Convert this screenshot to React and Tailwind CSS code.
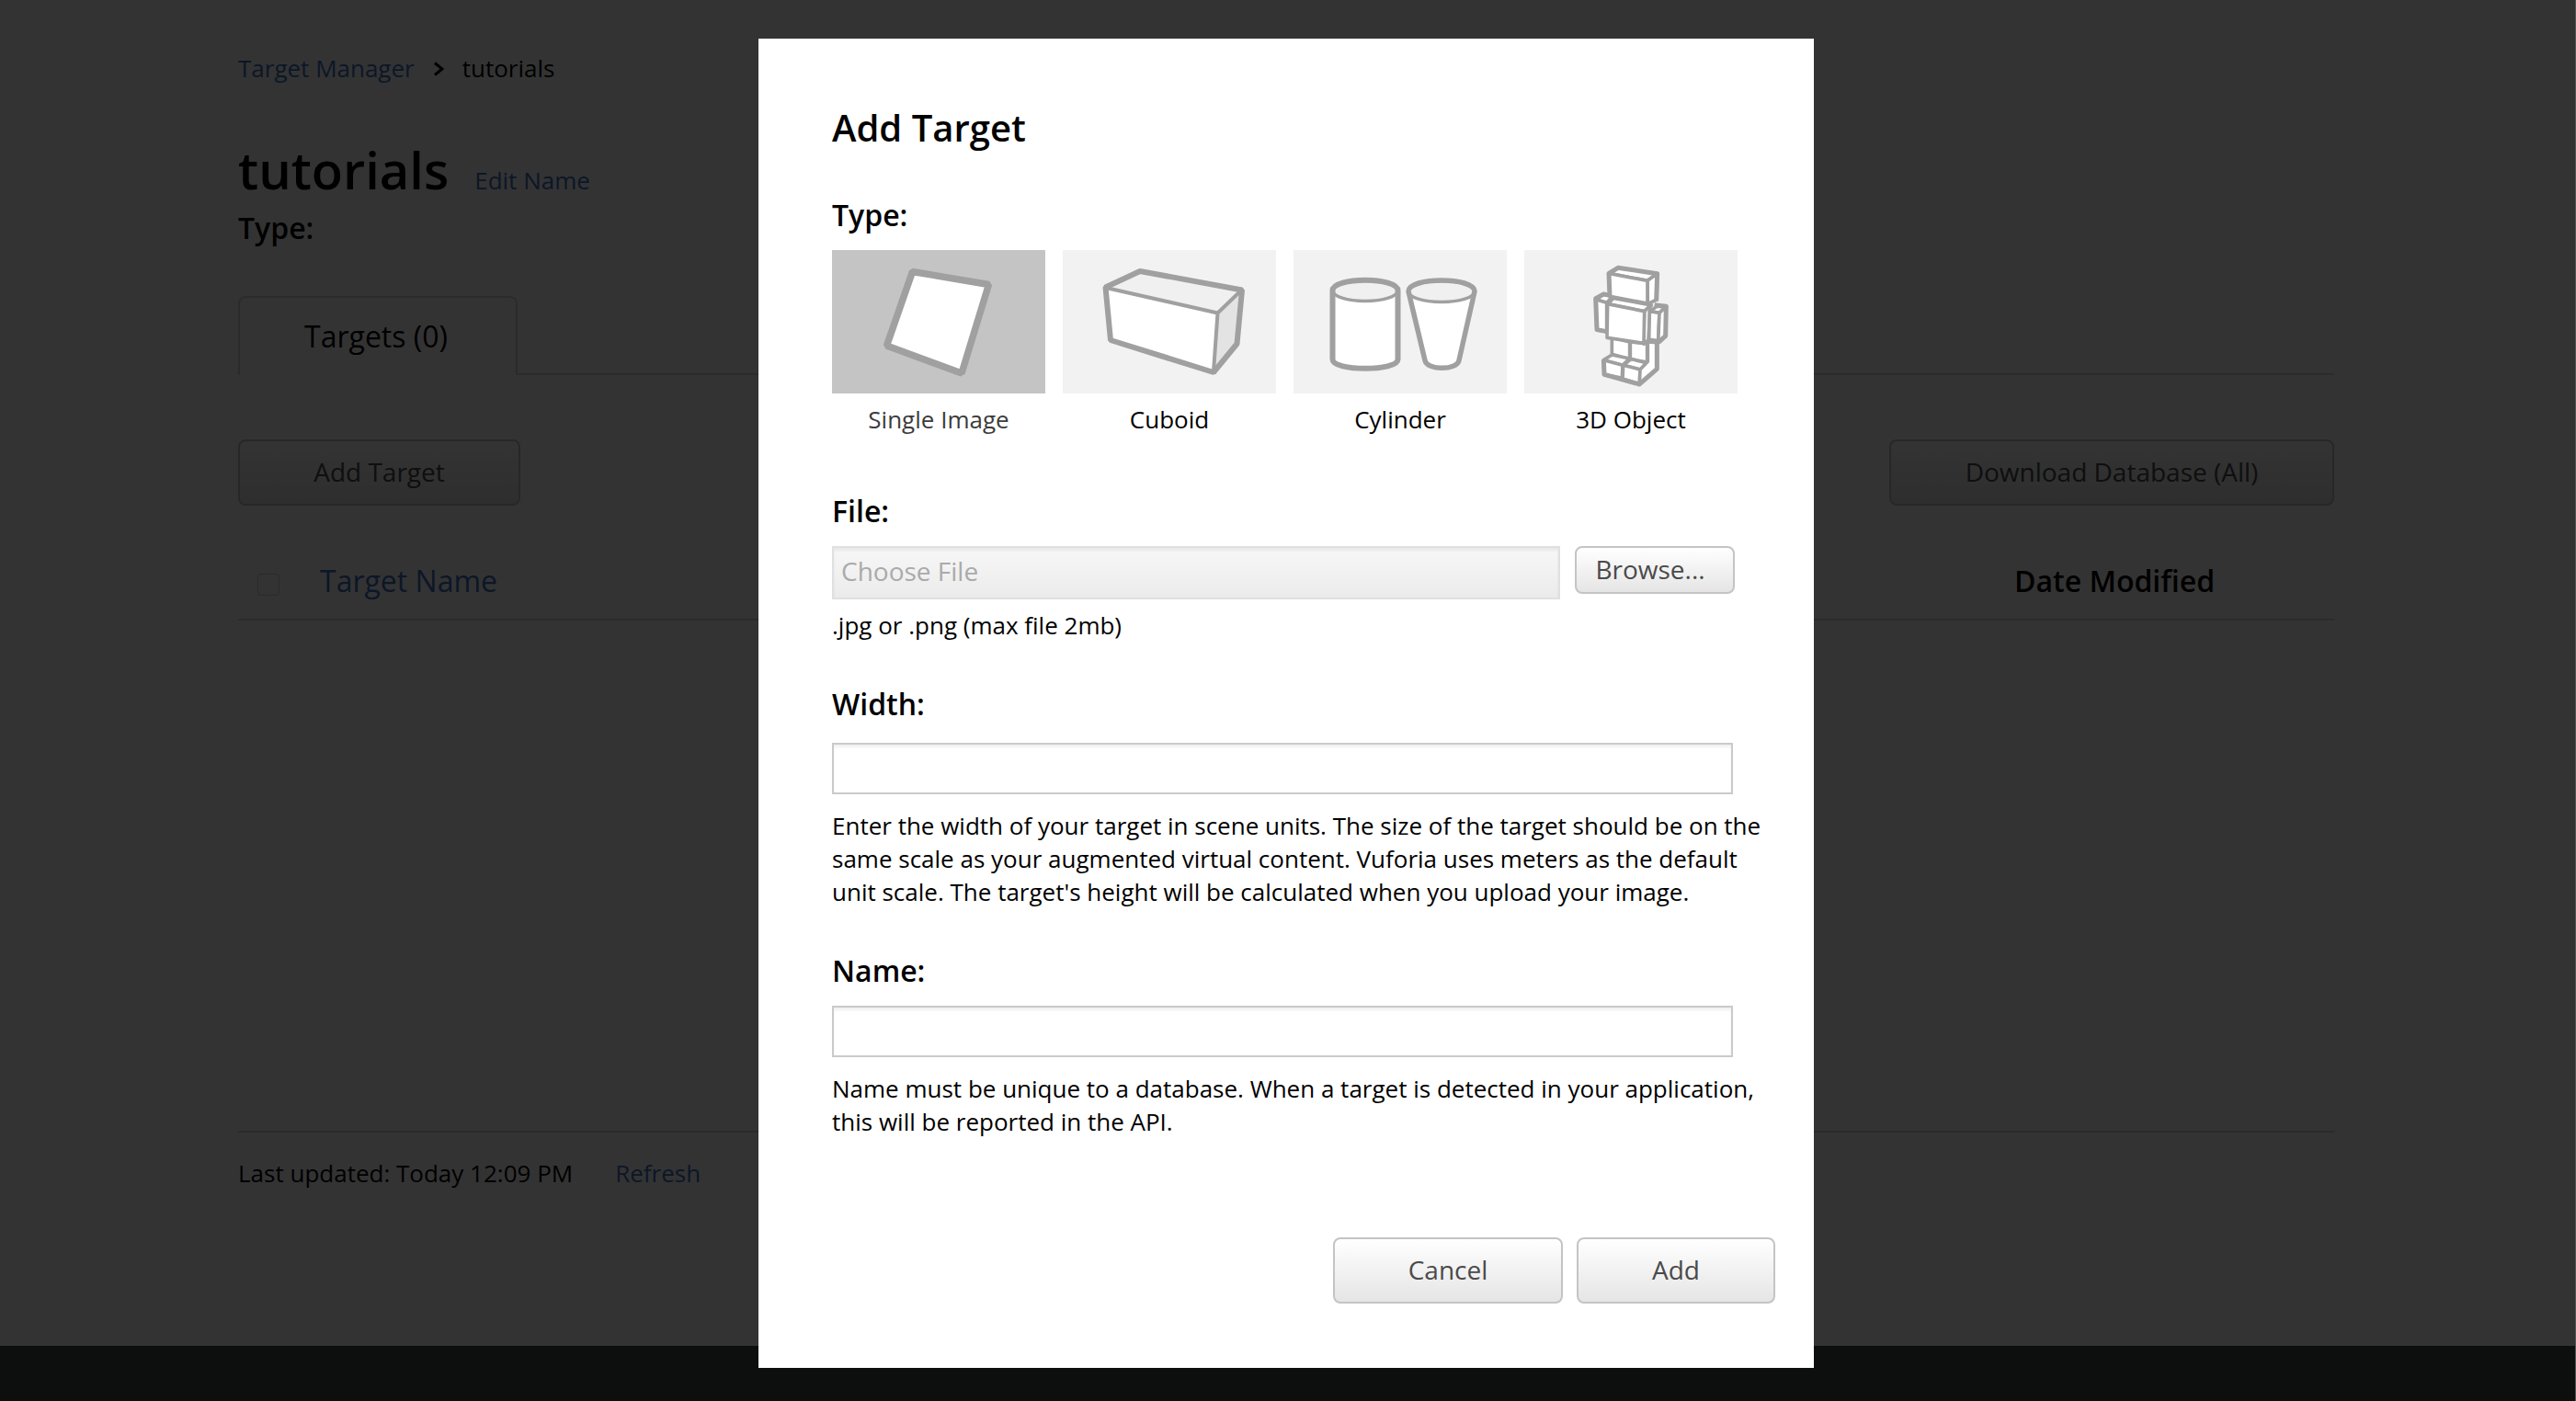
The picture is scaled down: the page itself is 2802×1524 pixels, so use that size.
import React, { useState } from "react";

const stroke = "#a0a0a0";

function SingleImageIcon() {
  return (
    <svg viewBox="0 0 232 156" className="block w-full" aria-hidden="true">
      <path d="M87.5 23.5 L170.5 37.5 L141 134 L59.5 104 Z" fill="#fff" stroke={stroke} strokeWidth="7.5" strokeLinejoin="bevel" />
    </svg>
  );
}

function CuboidIcon() {
  return (
    <svg viewBox="0 0 232 156" className="block w-full" aria-hidden="true">
      <path d="M47 41 L84 23.5 L194.5 43.5 L168.5 68.5 Z" fill="#f0f0f0" />
      <path d="M47 41 L168.5 68.5 L164 132.5 L52.5 98 Z" fill="#fff" />
      <path d="M194.5 43.5 L189 102 L164 132.5 L168.5 68.5 Z" fill="#e3e3e3" />
      <path d="M47 41 L168.5 68.5 L194.5 43.5 M168.5 68.5 L164 132" fill="none" stroke={stroke} strokeWidth="4" />
      <path d="M46.5 40.5 L84 23 L195 43.5 L189.5 102 L164 133 L52 98 Z" fill="none" stroke={stroke} strokeWidth="6" strokeLinejoin="bevel" />
    </svg>
  );
}

function CylinderIcon() {
  return (
    <svg viewBox="0 0 232 156" className="block w-full" aria-hidden="true">
      <path d="M42.5 44 V119 C42.5 132 113.5 132 113.5 119 V44 Z" fill="#fff" />
      <ellipse cx="78" cy="44" rx="35.5" ry="11.5" fill="#f0f0f0" stroke={stroke} strokeWidth="3.5" />
      <path d="M42.5 44 C42.5 29 113.5 29 113.5 44 V119 C113.5 132 42.5 132 42.5 119 Z" fill="none" stroke={stroke} strokeWidth="6" />
      <path d="M125 45 L143 120 C145 130 178 130 180 120 L197 45 Z" fill="#fff" />
      <ellipse cx="161" cy="45" rx="36" ry="11.5" fill="#f0f0f0" stroke={stroke} strokeWidth="3.5" />
      <path d="M125 45 C125 29 197 29 197 45 L180 120 C178 131 145 131 143 120 Z" fill="none" stroke={stroke} strokeWidth="5.5" />
    </svg>
  );
}

function ObjectIcon() {
  return (
    <svg viewBox="0 0 232 156" className="block w-full" aria-hidden="true">
      <g transform="translate(57 8) scale(0.3333)" fill="#fff" stroke={stroke} strokeWidth="11" strokeLinejoin="round">
        <path d="M115 262 V316 L173 332 V276 Z" />
        <path d="M175 276 V332 L230 342 V282 Z" />
        <path d="M88 335 L115 318 L172 330 L150 352 Z" />
        <path d="M88 335 L150 352 L148 394 L90 382 Z" />
        <path d="M152 352 L178 332 L229 344 L207 366 Z" />
        <path d="M152 352 L207 366 L205 414 L150 396 Z" />
        <path d="M207 366 L232 340 V276 L262 278 V364 L205 414 Z" />
        <path d="M88 335 L90 382 L205 414 L262 364 V278" fill="none" strokeWidth="15" />
        <path d="M62 137 L88 120 L116 127 L98 148 Z" />
        <path d="M62 137 L98 148 L98 242 L66 236 Z" />
        <path d="M98 242 L66 236 L62 134 L88 120 L112 125" fill="none" strokeWidth="15" />
        <path d="M101 152 L120 133 L244 156 L221 176 Z" />
        <path d="M221 176 L240 158 L234 270 L219 282 Z" />
        <path d="M101 152 L221 176 L219 280 L99 262 Z" />
        <path d="M238 176 L262 160 L292 160 L270 181 Z" />
        <path d="M238 176 L270 181 L266 272 L236 268 Z" />
        <path d="M270 181 L292 160 L290 256 L266 278 Z" />
        <path d="M254 155 L292 160 L290 256 L267 277" fill="none" strokeWidth="15" />
        <path d="M105 52 L135 34 L263 53 L231 76 Z" />
        <path d="M231 76 L263 53 L261 138 L232 152 Z" />
        <path d="M105 52 L231 76 L231 150 L108 127 Z" />
        <path d="M108 127 L105 52 L135 34 L263 53 L260 142" fill="none" strokeWidth="15" />
      </g>
    </svg>
  );
}

const targetTypes = [
  { id: "single", label: "Single Image", Icon: SingleImageIcon },
  { id: "cuboid", label: "Cuboid", Icon: CuboidIcon },
  { id: "cylinder", label: "Cylinder", Icon: CylinderIcon },
  { id: "object", label: "3D Object", Icon: ObjectIcon },
];

function Button({ className, children }) {
  return (
    <button
      type="button"
      className={
        "rounded-lg border-2 border-[#c4c4c4] bg-linear-to-b from-white to-[#e5e5e5] pb-0.5 text-[28px] text-[#4a4a4a] " +
        className
      }
    >
      {children}
    </button>
  );
}

function Page() {
  return (
    <div className="flex min-h-screen flex-col bg-white pr-1">
      <main className="mx-auto w-full max-w-[2280px] grow pt-14">
        <nav aria-label="Breadcrumb" className="flex items-center text-[26px] leading-9">
          <a href="#manager" className="text-[#3c72c4]">Target Manager</a>
          <svg viewBox="0 0 12 16" className="mr-5 ml-5 mt-0.5 h-4 w-3" fill="none" stroke="#000" strokeWidth="3" aria-hidden="true">
            <path d="M2 1.5 L10 8 L2 14.5" />
          </svg>
          <span>tutorials</span>
        </nav>

        <div className="mt-[54px] flex items-baseline gap-7">
          <h1 className="text-[56px] leading-[76px] font-semibold">tutorials</h1>
          <a href="#edit" className="text-[26px] leading-9 text-[#3c72c4]">Edit Name</a>
        </div>
        <p className="mt-1 text-[32px] leading-[44px] font-semibold">Type:</p>

        <div className="mt-[52px] flex">
          <button type="button" className="h-[86px] w-[304px] rounded-t-lg border-2 border-b-0 border-[#d8d8d8] pr-1 text-[32px]">
            Targets (0)
          </button>
          <div className="flex-1 border-b-2 border-[#d8d8d8]" />
        </div>

        <div className="mt-[70px] flex justify-between">
          <Button className="h-[72px] w-[307px]">Add Target</Button>
          <Button className="h-[72px] w-[484px]">Download Database (All)</Button>
        </div>

        <div className="mt-10 min-h-[642px] border-b-2 border-[#d8d8d8]">
          <table className="w-full text-left text-[32px] leading-[44px]">
            <thead>
              <tr className="h-[84px] border-b-2 border-[#d8d8d8]">
                <th className="w-[89px] pl-[21px]">
                  <input
                    type="checkbox"
                    aria-label="Select all targets"
                    className="mt-2 block size-6 appearance-none rounded-sm border border-[#d0d0d0] bg-white"
                  />
                </th>
                <th className="font-normal">
                  <a href="#name" className="text-[#3c72c4]">Target Name</a>
                </th>
                <th className="w-[348px] font-semibold">Date Modified</th>
              </tr>
            </thead>
          </table>
        </div>

        <div className="mt-[26px] flex gap-[46px] text-[26px] leading-9">
          <span>Last updated: Today 12:09 PM</span>
          <a href="#refresh" className="text-[#3c72c4]">Refresh</a>
        </div>
      </main>
      <footer className="-mr-1 h-[60px] bg-[#414846]" />
    </div>
  );
}

function AddTargetDialog() {
  const [type, setType] = useState("single");
  const field =
    "block h-14 w-full max-w-[980px] border-2 border-[#cacaca] bg-white px-2 text-[28px] shadow-[inset_0_3px_3px_rgba(0,0,0,0.06)] outline-none";
  const heading = "block text-[32px] leading-[44px] font-semibold";
  const help = "mt-4 -mr-10 max-w-[1028px] text-[26px] leading-9";

  return (
    <div className="fixed inset-0 overflow-hidden border-r border-[#555] bg-black/80 pr-[3px] pt-[42px]">
      <form
        role="dialog"
        aria-labelledby="dialog-title"
        className="mx-auto w-full max-w-[1148px] bg-white px-20 pt-[70px] pb-[70px] text-black"
      >
        <h2 id="dialog-title" className="text-[40px] leading-[54px] font-semibold">Add Target</h2>

        <fieldset className="mt-[46px]">
          <legend className={heading}>Type:</legend>
          <div className="mt-4 flex gap-[19px]">
            {targetTypes.map(({ id, label, Icon }) => (
              <label key={id} className="relative w-[232px] text-center text-[26px] leading-9 has-checked:text-[#3c3c3c]">
                <input
                  type="radio"
                  name="type"
                  className="peer sr-only"
                  checked={type === id}
                  onChange={() => setType(id)}
                />
                <span className="block bg-[#f2f2f2] peer-checked:bg-[#c4c4c4]">
                  <Icon />
                </span>
                <span className="mt-[10px] block">{label}</span>
              </label>
            ))}
          </div>
        </fieldset>

        <label htmlFor="file" className={heading + " mt-[60px]"}>File:</label>
        <div className="mt-4 flex items-start gap-4">
          <input
            id="file"
            type="text"
            disabled
            placeholder="Choose File"
            className="h-[58px] w-full max-w-[792px] border-2 border-[#e0e0e0] bg-linear-to-b from-[#f7f7f7] to-[#ebebeb] px-2 pb-1 text-[28px] shadow-[inset_0_3px_3px_rgba(0,0,0,0.06)] placeholder:text-[#aaa]"
          />
          <Button className="h-[52px] w-[174px] shrink-0 pr-2.5 leading-9">Browse...</Button>
        </div>
        <p className="mt-[10px] text-[26px] leading-9">.jpg or .png (max file 2mb)</p>

        <label htmlFor="width" className={heading + " mt-[46px]"}>Width:</label>
        <input id="width" type="text" className={field + " mt-5"} />
        <p className={help}>
          Enter the width of your target in scene units. The size of the target should be on the
          same scale as your augmented virtual content. Vuforia uses meters as the default
          unit scale. The target's height will be calculated when you upload your image.
        </p>

        <label htmlFor="name" className={heading + " mt-[46px]"}>Name:</label>
        <input id="name" type="text" className={field + " mt-4"} />
        <p className={help}>
          Name must be unique to a database. When a target is detected in your application,
          this will be reported in the API.
        </p>

        <div className="-mr-[38px] mt-[108px] flex justify-end gap-[15px]">
          <Button className="h-[72px] w-[250px]">Cancel</Button>
          <Button className="h-[72px] w-[216px]">Add</Button>
        </div>
      </form>
    </div>
  );
}

export default function App() {
  return (
    <div className="font-['Open_Sans',sans-serif] text-black">
      <Page />
      <AddTargetDialog />
    </div>
  );
}
